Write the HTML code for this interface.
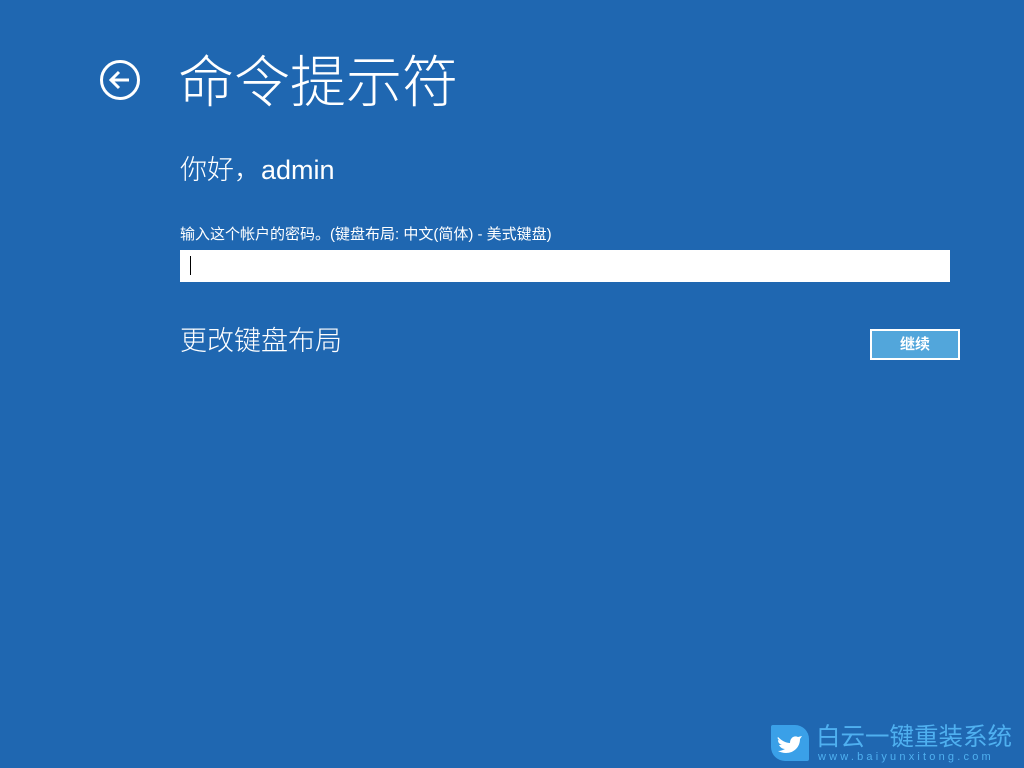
<!DOCTYPE html>
<html><head><meta charset="utf-8"><style>
html,body{margin:0;padding:0}
body{width:1024px;height:768px;background:#1f67b1;position:relative;overflow:hidden;font-family:"Liberation Sans","Noto Sans CJK SC",sans-serif;color:#fff}
.a{position:absolute;white-space:nowrap}
</style></head><body>
<svg class="a" style="left:99px;top:59px" width="42" height="42" viewBox="0 0 42 42">
<circle cx="21" cy="21" r="18.5" fill="none" stroke="#fff" stroke-width="3"/>
<path d="M30 21H12M20 13l-8 8 8 8" fill="none" stroke="#fff" stroke-width="3"/>
</svg>
<div class="a" style="left:178px;top:47px;font-size:56px;line-height:72px;font-weight:300">命令提示符</div>
<div class="a" style="left:180px;top:152px;font-size:27px;line-height:36px;font-weight:300">你好，admin</div>
<div class="a" style="left:180px;top:226px;font-size:15px;line-height:18px">输入这个帐户的密码。(键盘布局: 中文(简体) - 美式键盘)</div>
<div class="a" style="left:180px;top:250px;width:770px;height:32px;background:#fff"></div>
<div class="a" style="left:190px;top:256px;width:1px;height:19px;background:#000"></div>
<div class="a" style="left:180px;top:324px;font-size:27px;line-height:34px;font-weight:300">更改键盘布局</div>
<div class="a" style="left:870px;top:329px;width:86px;height:27px;border:2px solid #fff;background:#52a6db;font-size:15px;line-height:27px;text-align:center;font-weight:bold">继续</div>
<div class="a" style="left:771px;top:725px;width:38px;height:36px;background:#3aa0e8;border-radius:2px 14px 2px 14px"></div>
<svg class="a" style="left:776px;top:731px" width="28" height="24" viewBox="0 0 28 24">
<path d="M2 6c4 4 8 6 12 6 0-5 4-8 8-6l4-1-2 3c0 8-6 14-14 14-3 0-6-1-8-2 3 0 5-1 7-2-3 0-5-2-6-4h3c-3-1-4-3-4-5l3 1C2 9 1 7 2 6z" fill="#fff"/>
</svg>
<div class="a" style="left:816px;top:723px;font-size:24.5px;line-height:30px;color:#4fb0f0">白云一键重装系统</div>
<div class="a" style="left:818px;top:751px;font-size:11px;line-height:12px;color:#4fb0f0;letter-spacing:3.2px">www.baiyunxitong.com</div>
</body></html>
